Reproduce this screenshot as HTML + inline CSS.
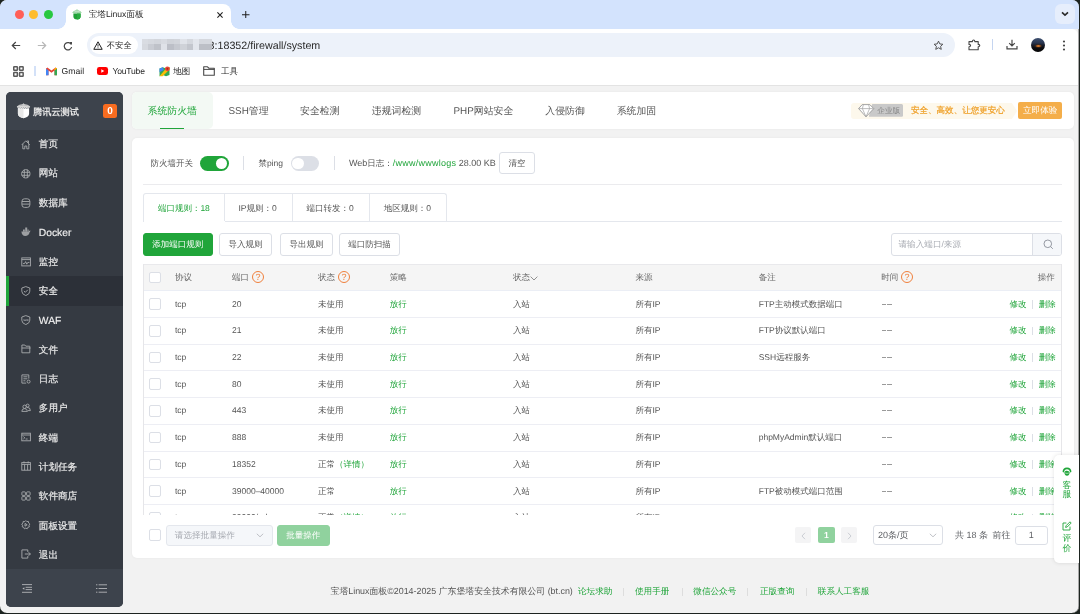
<!DOCTYPE html>
<html><head><meta charset="utf-8">
<style>
*{box-sizing:border-box;margin:0;padding:0}
html,body{text-rendering:geometricPrecision;width:1080px;height:614px;overflow:hidden;background:#1d2420;font-family:"Liberation Sans",sans-serif}
.abs{position:absolute}
#win{will-change:transform;position:absolute;left:0;top:0;width:1079px;height:613px;border-radius:7px;overflow:hidden;background:#f2f2f2;box-shadow:inset -0.6px 0 0 #777}
#tabs{position:absolute;left:0;top:0;width:1079px;height:29px;background:#d3e3fd}
#tb{position:absolute;left:0;top:28.5px;width:1078.4px;height:30px;background:#fff;border-radius:0 6px 0 0}
#bm{position:absolute;left:0;top:58px;width:1078.4px;height:27.5px;background:#fff;border-bottom:1px solid #e3e3e3}
.dot{position:absolute;width:9px;height:9px;border-radius:50%;top:10px}
#tab{position:absolute;left:66px;top:4px;width:165px;height:25px;background:#fff;border-radius:8px 8px 0 0}
.fl{position:absolute;bottom:0;width:8px;height:8px;background:radial-gradient(circle at var(--p) 0,#d3e3fd 7.5px,#fff 8px)}
.fl.l{left:-8px;--p:0}.fl.r{right:-8px;--p:100%}
.t{position:absolute;white-space:nowrap;line-height:1}
#side{position:absolute;left:6px;top:92px;width:117px;height:515px;background:#353a42;border-radius:5px;overflow:hidden}
#side .hd{position:absolute;left:0;top:0;width:117px;height:38px;background:#3d434c}
#side .ft{position:absolute;left:0;top:477px;width:117px;height:38px;background:#3d434c}
.mi{position:absolute;left:0;width:117px;height:29.3px}
.mi span{position:absolute;left:32.8px;top:50%;transform:translateY(calc(-50% - 0.5px));color:#e8e8e8;font-size:9.6px;font-weight:500;white-space:nowrap;-webkit-text-stroke:0.2px #e8e8e8}
.mi svg{position:absolute;left:14.8px;top:9.6px}
.mi.on{background:#2c3038}
.mi.on:before{content:"";position:absolute;left:0;top:0;width:3px;height:100%;background:#20a53a}
#nav{position:absolute;left:132px;top:92.2px;width:942px;height:37px;background:#fff;border-radius:5px;box-shadow:0 0 3px rgba(0,0,0,0.05)}
#main{position:absolute;left:132px;top:138px;width:942px;height:419.5px;background:#fff;border-radius:5px;box-shadow:0 0 3px rgba(0,0,0,0.05)}
.nv{top:15.1px;font-size:9.9px;color:#555}
.tx{font-size:8.5px;color:#555}
.btn{border:1px solid #dcdfe6;border-radius:3px;background:#fff;font-size:8.5px;color:#555;text-align:center;display:flex;align-items:center;justify-content:center;white-space:nowrap;padding-top:1.5px}
.cb{width:11.6px;height:11.5px;border:1px solid #dcdfe6;border-radius:2px;background:#fff}
.th{top:9.1px;font-size:8.5px;color:#666}
.td{font-size:8.5px;color:#555}
.q{position:absolute;width:12px;height:12px;border:1px solid #f0803c;border-radius:50%;color:#f0803c;font-size:9px;text-align:center;line-height:10.5px}
.ftl{top:587px;font-size:8.6px;color:#20a53a}
</style></head><body>
<div id="win">
  <div id="tabs"></div>
  <div class="dot" style="left:15px;background:#ff5f57"></div>
  <div class="dot" style="left:29px;background:#febc2e"></div>
  <div class="dot" style="left:43.5px;background:#28c840"></div>

  <div id="tab"><div class="fl l"></div><div class="fl r"></div></div>
  <svg class="abs" style="left:72.2px;top:8.8px" width="10" height="11" viewBox="0 0 10 11"><path d="M0.2 3.8Q1.2 1.8 3 1.4L5 0.2L7 1.4Q8.8 1.8 9.8 3.8L8.6 4.2H1.4Z" fill="#9fd8a8"/><path d="M2.5 2.6Q5 1.8 7.5 2.6" stroke="#d8f0dc" stroke-width="0.6" fill="none"/><path d="M1.4 4.4H8.6V7.6Q8.6 10.4 5 10.6Q1.4 10.4 1.4 7.6Z" fill="#1ea036"/><path d="M5 4.4H8.6V7.6Q8.6 10.4 5 10.6Z" fill="#27ab3e"/></svg>
  <div class="t" style="left:88.7px;top:9.8px;font-size:8.6px;color:#1f1f1f">宝塔Linux面板</div>
  <svg class="abs" style="left:217px;top:11.6px" width="6" height="6" viewBox="0 0 6 6"><path d="M0.4 0.4L5.6 5.6M5.6 0.4L0.4 5.6" stroke="#1f1f1f" stroke-width="1.1"/></svg>
  <svg class="abs" style="left:242.3px;top:10.8px" width="7.5" height="7.5" viewBox="0 0 7.5 7.5"><path d="M3.75 0V7.5M0 3.75H7.5" stroke="#1f1f1f" stroke-width="1"/></svg>
  <div class="abs" style="left:1055px;top:4px;width:20px;height:20px;border-radius:6px;background:#e6eefc"></div>
  <svg class="abs" style="left:1061px;top:11px" width="8" height="6" viewBox="0 0 8 6"><path d="M1 1.4L4 4.2L7 1.4" stroke="#2a2a2a" stroke-width="1.6" fill="none"/></svg>
  <div id="tb"></div>
  <svg class="abs" style="left:11px;top:40.5px" width="10" height="9" viewBox="0 0 10 9"><path d="M9.2 4.5H1.5M4.8 1L1.3 4.5L4.8 8" stroke="#474747" stroke-width="1.2" fill="none"/></svg>
  <svg class="abs" style="left:36.5px;top:40.5px" width="10" height="9" viewBox="0 0 10 9"><path d="M0.8 4.5H8.5M5.2 1L8.7 4.5L5.2 8" stroke="#b8b8b8" stroke-width="1.2" fill="none"/></svg>
  <svg class="abs" style="left:62.5px;top:40.5px" width="10" height="10" viewBox="0 0 10 10"><path d="M8.3 3.6A3.7 3.7 0 1 0 8.6 6" stroke="#474747" stroke-width="1.2" fill="none"/><path d="M6.3 0.9H9V3.7Z" fill="#474747"/></svg>
  <div class="abs" style="left:86.7px;top:32.8px;width:868.3px;height:24px;border-radius:12px;background:#edf2fa"></div>
  <div class="abs" style="left:90px;top:36.3px;width:47.5px;height:17.5px;border-radius:9px;background:#fff"></div>
  <svg class="abs" style="left:93px;top:40.5px" width="10" height="9" viewBox="0 0 10 9"><path d="M5 0.8L9.2 8.3H0.8Z" stroke="#1f1f1f" stroke-width="1" fill="none" stroke-linejoin="round"/><path d="M5 3.2V5.6M5 6.4V7.2" stroke="#1f1f1f" stroke-width="0.9"/></svg>
  <div class="t" style="left:106.8px;top:40.8px;font-size:8.3px;font-weight:500;color:#1f1f1f">不安全</div>
  <div class="t" style="left:208.6px;top:40.8px;font-size:10.7px;color:#2a2a2a">3:18352/firewall/system</div>
  <div class="abs" style="left:0;top:0;width:0;height:0;filter:blur(0.7px)">
    <div class="abs" style="left:141.7px;top:39.3px;width:6.6px;height:4.3px;background:#d9dce2"></div>
    <div class="abs" style="left:141.7px;top:43.5px;width:6.6px;height:6.2px;background:#d6d9df"></div>
    <div class="abs" style="left:148.0px;top:39.3px;width:6.3px;height:4.3px;background:#d6d9df"></div>
    <div class="abs" style="left:148.0px;top:43.5px;width:6.3px;height:6.2px;background:#c9ccd3"></div>
    <div class="abs" style="left:154.0px;top:39.3px;width:6.9px;height:4.3px;background:#d3d6dc"></div>
    <div class="abs" style="left:154.0px;top:43.5px;width:6.9px;height:6.2px;background:#bfc2c9"></div>
    <div class="abs" style="left:160.6px;top:39.3px;width:6.6px;height:4.3px;background:#d8dbe1"></div>
    <div class="abs" style="left:160.6px;top:43.5px;width:6.6px;height:6.2px;background:#dfe2e8"></div>
    <div class="abs" style="left:166.9px;top:39.3px;width:7.0px;height:4.3px;background:#d0d3d9"></div>
    <div class="abs" style="left:166.9px;top:43.5px;width:7.0px;height:6.2px;background:#bcbfc7"></div>
    <div class="abs" style="left:173.6px;top:39.3px;width:6.9px;height:4.3px;background:#d2d5db"></div>
    <div class="abs" style="left:173.6px;top:43.5px;width:6.9px;height:6.2px;background:#c6c9d0"></div>
    <div class="abs" style="left:180.2px;top:39.3px;width:6.6px;height:4.3px;background:#e0e3e9"></div>
    <div class="abs" style="left:180.2px;top:43.5px;width:6.6px;height:6.2px;background:#cfd2d8"></div>
    <div class="abs" style="left:186.5px;top:39.3px;width:6.6px;height:4.3px;background:#d5d8de"></div>
    <div class="abs" style="left:186.5px;top:43.5px;width:6.6px;height:6.2px;background:#c3c6cd"></div>
    <div class="abs" style="left:192.8px;top:39.3px;width:6.6px;height:4.3px;background:#e3e6ec"></div>
    <div class="abs" style="left:192.8px;top:43.5px;width:6.6px;height:6.2px;background:#e3e6ec"></div>
    <div class="abs" style="left:199.1px;top:39.3px;width:12.5px;height:4.3px;background:#d5d8de"></div>
    <div class="abs" style="left:199.1px;top:43.5px;width:12.5px;height:6.2px;background:#bcbfc6"></div>
  </div>
  
  <svg class="abs" style="left:932.5px;top:39.8px" width="11" height="11" viewBox="0 0 24 24"><path d="M12 2.5L14.9 8.6L21.5 9.3L16.6 13.8L18 20.4L12 17L6 20.4L7.4 13.8L2.5 9.3L9.1 8.6Z" stroke="#474747" stroke-width="2" fill="none" stroke-linejoin="round"/></svg>
  <svg class="abs" style="left:967.5px;top:38.5px" width="13" height="12" viewBox="0 0 13 12"><path d="M1 2.6H4.4Q4.4 1 5.6 1Q6.8 1 6.8 2.6H10.2V5.4Q11.8 5.4 11.8 6.6Q11.8 7.8 10.2 7.8V10.8H1V7.8Q2.6 7.8 2.6 6.6Q2.6 5.4 1 5.4Z" stroke="#474747" stroke-width="1.1" fill="none" stroke-linejoin="round"/></svg>
  <div class="abs" style="left:992.3px;top:39.2px;width:1px;height:11px;background:#c5d5f0"></div>
  <svg class="abs" style="left:1006px;top:39.2px" width="12" height="11" viewBox="0 0 12 11"><path d="M6 0.8V7M3.2 4.2L6 7L8.8 4.2M1 7V9.8H11V7" stroke="#474747" stroke-width="1.2" fill="none"/></svg>
  <div class="abs" style="left:1030.8px;top:37.9px;width:14.2px;height:14.2px;border-radius:50%;overflow:hidden;background:linear-gradient(180deg,#3d5070 0%,#2a3650 35%,#1a1e2a 52%,#0c0c10 70%,#050505 100%)"><div class="abs" style="left:3px;top:6.5px;width:8px;height:4px;border-radius:50%;background:radial-gradient(ellipse at 55% 50%,#f5b040 0,#c06a28 20%,rgba(90,50,20,0.5) 50%,rgba(0,0,0,0) 75%)"></div></div>
  <svg class="abs" style="left:1061.5px;top:40px" width="4" height="11" viewBox="0 0 4 11"><circle cx="2" cy="1.5" r="1.1" fill="#474747"/><circle cx="2" cy="5.5" r="1.1" fill="#474747"/><circle cx="2" cy="9.5" r="1.1" fill="#474747"/></svg>
  <div id="bm"></div>
  <svg class="abs" style="left:13.3px;top:65.8px" width="11" height="11" viewBox="0 0 11 11"><g stroke="#5a5a5a" stroke-width="1.5" fill="none"><rect x="0.75" y="0.75" width="3.6" height="3.6" rx="0.5"/><rect x="6.55" y="0.75" width="3.6" height="3.6" rx="0.5"/><rect x="0.75" y="6.55" width="3.6" height="3.6" rx="0.5"/><rect x="6.55" y="6.55" width="3.6" height="3.6" rx="0.5"/></g></svg>
  <div class="abs" style="left:34.2px;top:65.8px;width:1.5px;height:10.5px;background:#d3e1f8"></div>
  <svg class="abs" style="left:45.8px;top:67px" width="11" height="9" viewBox="0 0 11 9"><path d="M0 1.5V8.2H2.5V3.6L5.5 5.8L8.5 3.6V8.2H11V1.5L9.6 0.6L5.5 3.6L1.4 0.6Z" fill="#ea4335"/><path d="M0 1.5V8.2H2.5V3.6Z" fill="#4285f4"/><path d="M8.5 3.6V8.2H11V1.5Z" fill="#34a853"/><path d="M9.6 0.6L11 1.5L8.5 3.6V2.2Z" fill="#fbbc04"/></svg>
  <div class="t" style="left:61.6px;top:67px;font-size:8.6px;color:#1f1f1f">Gmail</div>
  <div class="abs" style="left:96.7px;top:66.8px;width:11px;height:8px;border-radius:2.3px;background:#ff0000"></div>
  <svg class="abs" style="left:96.7px;top:66.8px" width="11" height="8" viewBox="0 0 11 8"><path d="M4.3 2.3L7.3 4L4.3 5.7Z" fill="#fff"/></svg>
  <div class="t" style="left:112.4px;top:67px;font-size:8.6px;color:#1f1f1f;letter-spacing:-0.2px">YouTube</div>
  <svg class="abs" style="left:158.5px;top:65.5px" width="11" height="11" viewBox="0 0 11 11"><path d="M0.5 2.5L3.8 1.2L7 2.5L10.5 1.2V9L7 10.3L3.8 9L0.5 10.3Z" fill="#34a853"/><path d="M0.5 10.3L7 2.5L10.5 1.2V3.5L3.6 10.3Z" fill="#fbbc04"/><path d="M3.8 1.2L0.5 2.5V6.2L4.8 4Z" fill="#4285f4"/><circle cx="8.4" cy="2.8" r="2.4" fill="#ea4335"/><circle cx="8.4" cy="2.8" r="0.9" fill="#a52714"/></svg>
  <div class="t" style="left:173.2px;top:67px;font-size:8.5px;color:#1f1f1f">地图</div>
  <svg class="abs" style="left:203px;top:66px" width="12" height="10" viewBox="0 0 12 10"><path d="M0.7 0.8H4.5L5.8 2.2H11.3V9.2H0.7Z" stroke="#474747" stroke-width="1.1" fill="none" stroke-linejoin="round"/><path d="M0.7 3.4H11.3" stroke="#474747" stroke-width="1"/></svg>
  <div class="t" style="left:221px;top:67px;font-size:8.5px;color:#1f1f1f">工具</div>
  <div id="side">
    <div class="hd">
      <svg class="abs" style="left:9.6px;top:11px" width="15" height="16" viewBox="0 0 15 16"><path d="M7.5 0.3L8.6 1.3Q11.6 1.4 14.2 3.4L13.2 5.2L12 4.4L10.8 5.4L9.6 4.4L8.5 5.4L7.5 4.4L6.5 5.4L5.4 4.4L4.2 5.4L3 4.4L1.8 5.2L0.8 3.4Q3.4 1.4 6.4 1.3Z" fill="#d8d8d8"/><path d="M2.4 3Q7.5 1 12.6 3" stroke="#9a9ca0" stroke-width="0.5" fill="none"/><path d="M1.9 5.4L3 4.9L4.2 5.8L5.4 4.9L6.5 5.8L7.5 4.9L8.5 5.8L9.6 4.9L10.8 5.8L12 4.9L13.1 5.4V10.8Q13.1 14 7.5 15.3Q1.9 14 1.9 10.8Z" fill="#fff"/><path d="M1.9 5.4L3 4.9L4.2 5.8L5.4 4.9L6.5 5.8L7.5 4.9V15.3Q1.9 14 1.9 10.8Z" fill="#e9e9e9"/></svg>
      <div class="t" style="left:27px;top:15.6px;font-size:9.2px;font-weight:bold;color:#e4e4e4">腾讯云测试</div>
      <div class="abs" style="left:97px;top:12px;width:14px;height:14px;border-radius:2.5px;background:#f86c20;color:#fff;font-size:10px;font-weight:bold;text-align:center;line-height:15.4px">0</div>
    </div>
    <div class="mi" style="top:38.00px"><svg width="10" height="10" viewBox="0 0 10 10"><path d="M0.8 4.8L4.8 0.8L8.8 4.8M1.8 3.8V8.8H3.8V6H5.8V8.8H7.8V3.8M6.3 1.6V0.9H7.5V3" stroke="#a9abae" stroke-width="0.9" fill="none" stroke-linejoin="round"/></svg><span style="margin-top:0.50px">首页</span></div>
    <div class="mi" style="top:67.26px"><svg width="10" height="10" viewBox="0 0 10 10"><circle cx="4.8" cy="4.8" r="4.2" stroke="#a9abae" stroke-width="0.9" fill="none"/><path d="M0.8 3.3H8.8M0.8 6.3H8.8M3.3 0.7V8.9M6.3 0.7V8.9" stroke="#a9abae" stroke-width="0.9" fill="none"/></svg><span style="margin-top:0.60px">网站</span></div>
    <div class="mi" style="top:96.52px"><svg width="10" height="10" viewBox="0 0 10 10"><rect x="0.9" y="0.8" width="8" height="8.6" rx="2.6" stroke="#a9abae" stroke-width="0.9" fill="none"/><path d="M1 3.5H8.8M1 6.1H8.8" stroke="#a9abae" stroke-width="0.9" fill="none"/></svg><span style="margin-top:0.70px">数据库</span></div>
    <div class="mi" style="top:125.78px"><svg width="10" height="10" viewBox="0 0 10 10"><path d="M0.4 4.6H7.8Q8.4 3.4 9.4 3.6Q9.4 4.8 8.6 5.2Q7.8 9 4.2 9Q0.8 9 0.4 4.6Z" fill="#9d9fa2"/><path d="M2 2.6H3.8V4.8H2Z M4.2 0.6H6.2V4.8H4.2Z M6.6 2.4H7.6V4.8H6.6Z" fill="#9d9fa2"/></svg><span style="font-size:10.3px;font-weight:normal;margin-top:1.70px;color:#f0f0f0;-webkit-text-stroke:0.15px #f0f0f0">Docker</span></div>
    <div class="mi" style="top:155.04px"><svg width="10" height="10" viewBox="0 0 10 10"><rect x="0.8" y="0.9" width="8.6" height="8" stroke="#a9abae" stroke-width="0.9" fill="none"/><path d="M0.8 2.6H9.4M2 6.6L3.6 6.6L4.6 4.6L5.8 7.2L6.8 5.4L8.4 5.4" stroke="#a9abae" stroke-width="0.9" fill="none"/></svg><span style="margin-top:0.90px">监控</span></div>
    <div class="mi on" style="top:184.30px"><svg width="10" height="10" viewBox="0 0 10 10"><path d="M4.8 0.6L8.8 2V5.2Q8.8 8.2 4.8 9.6Q0.8 8.2 0.8 5.2V2Z" stroke="#a9abae" stroke-width="0.9" fill="none" stroke-linejoin="round"/><path d="M2.9 5L4.3 6.3L6.8 3.8" stroke="#a9abae" stroke-width="0.9" fill="none"/></svg><span style="margin-top:1.00px">安全</span></div>
    <div class="mi" style="top:213.56px"><svg width="10" height="10" viewBox="0 0 10 10"><path d="M4.8 0.6L8.8 2V5.2Q8.8 8.2 4.8 9.6Q0.8 8.2 0.8 5.2V2Z" stroke="#a9abae" stroke-width="0.9" fill="none" stroke-linejoin="round"/><path d="M2.6 4.2L3.2 6L3.8 4.6L4.4 6L5 4.2M5.5 6L6.1 4.2L6.7 6M7.2 4.2V6" stroke="#a9abae" stroke-width="0.5" fill="none"/></svg><span style="font-size:10.3px;font-weight:normal;margin-top:2.00px;color:#f0f0f0;-webkit-text-stroke:0.15px #f0f0f0">WAF</span></div>
    <div class="mi" style="top:242.82px"><svg width="10" height="10" viewBox="0 0 10 10"><path d="M0.9 1H3.8L4.8 2.2H8.8V8.8H0.9Z" stroke="#a9abae" stroke-width="0.9" fill="none" stroke-linejoin="round"/><path d="M0.9 4H9.6" stroke="#a9abae" stroke-width="0.9" fill="none"/></svg><span style="margin-top:1.20px">文件</span></div>
    <div class="mi" style="top:272.08px"><svg width="10" height="10" viewBox="0 0 10 10"><path d="M7.8 4.6V0.9H0.9V9.1H5.2" stroke="#a9abae" stroke-width="0.9" fill="none"/><path d="M2.4 2.8H6.4M2.4 4.8H6.4M2.4 6.8H4.4" stroke="#a9abae" stroke-width="0.9" fill="none"/><circle cx="7.6" cy="7.6" r="1.5" stroke="#a9abae" stroke-width="0.9" fill="none"/></svg><span style="margin-top:1.30px">日志</span></div>
    <div class="mi" style="top:301.34px"><svg width="10" height="10" viewBox="0 0 10 10"><circle cx="3.6" cy="3.8" r="1.7" stroke="#a9abae" stroke-width="0.9" fill="none"/><circle cx="6.6" cy="2.6" r="1.5" stroke="#a9abae" stroke-width="0.9" fill="none"/><path d="M0.8 8.4Q0.8 5.6 3.6 5.6Q6.4 5.6 6.4 8.4ZM6 4.4Q9.4 4.2 9.4 7.6H7" stroke="#a9abae" stroke-width="0.9" fill="none"/></svg><span style="margin-top:1.40px">多用户</span></div>
    <div class="mi" style="top:330.60px"><svg width="10" height="10" viewBox="0 0 10 10"><rect x="0.8" y="1.2" width="8.6" height="7.6" stroke="#a9abae" stroke-width="0.9" fill="none"/><path d="M0.8 3H9.4M2.4 4.6L3.8 5.8L2.4 7M4.6 7H6.6" stroke="#a9abae" stroke-width="0.9" fill="none"/></svg><span style="margin-top:1.50px">终端</span></div>
    <div class="mi" style="top:359.86px"><svg width="10" height="10" viewBox="0 0 10 10"><rect x="0.8" y="1.6" width="8.6" height="7.6" stroke="#a9abae" stroke-width="0.9" fill="none"/><path d="M0.8 3.4H9.4M3 0.4V2.4M7.2 0.4V2.4M3.6 3.4V9.2M6.6 3.4V9.2" stroke="#a9abae" stroke-width="0.9" fill="none"/></svg><span style="margin-top:1.60px">计划任务</span></div>
    <div class="mi" style="top:389.12px"><svg width="10" height="10" viewBox="0 0 10 10"><rect x="0.9" y="0.9" width="3.5" height="3.5" rx="0.6" stroke="#a9abae" stroke-width="0.9" fill="none"/><rect x="5.6" y="0.9" width="3.5" height="3.5" rx="0.6" stroke="#a9abae" stroke-width="0.9" fill="none"/><rect x="0.9" y="5.6" width="3.5" height="3.5" rx="0.6" stroke="#a9abae" stroke-width="0.9" fill="none"/><rect x="5.6" y="5.6" width="3.5" height="3.5" rx="0.6" stroke="#a9abae" stroke-width="0.9" fill="none"/></svg><span style="margin-top:1.70px">软件商店</span></div>
    <div class="mi" style="top:418.38px"><svg width="10" height="10" viewBox="0 0 10 10"><path d="M4.8 0.6L5.8 1.6L7.4 1.4L7.6 3L8.9 4.1L8 5.3L8.4 6.8L6.9 7.3L6.2 8.8L4.8 8.1L3.4 8.8L2.7 7.3L1.2 6.8L1.6 5.3L0.7 4.1L2 3L2.2 1.4L3.8 1.6Z" stroke="#a9abae" stroke-width="0.9" fill="none" stroke-linejoin="round"/><path d="M4 3.4L6.2 4.8L4 6.2Z" stroke="#a9abae" stroke-width="0.9" fill="none"/></svg><span style="margin-top:1.80px">面板设置</span></div>
    <div class="mi" style="top:447.64px"><svg width="10" height="10" viewBox="0 0 10 10"><path d="M6.8 3V0.9H0.9V9.1H6.8V7" stroke="#a9abae" stroke-width="0.9" fill="none"/><path d="M3.8 5H9.4M7.6 3.2L9.4 5L7.6 6.8" stroke="#a9abae" stroke-width="0.9" fill="none"/></svg><span style="margin-top:1.90px">退出</span></div>
    <div class="ft">
      <svg class="abs" style="left:16px;top:14.5px" width="10" height="9" viewBox="0 0 10 9"><path d="M0 0.6H10M3.6 3.3H10M3.6 5.6H10M0 8.3H10" stroke="#b4b6b9" stroke-width="0.9"/><path d="M0.4 4.5L2.4 3.2V5.8Z" fill="#b4b6b9"/></svg>
      <svg class="abs" style="left:90px;top:14.5px" width="11" height="9" viewBox="0 0 11 9"><path d="M2.6 0.8H11M2.6 4.5H11M2.6 8.2H11" stroke="#b4b6b9" stroke-width="0.9"/><path d="M0 0.8H1.4M0 4.5H1.4M0 8.2H1.4" stroke="#b4b6b9" stroke-width="0.9"/></svg>
    </div>
  </div>
  <div id="nav">
    <div class="abs" style="left:0;top:0;width:80.5px;height:37px;background:#f3f9f4;border-radius:5px"></div>
    <div class="abs" style="left:28px;top:35.5px;width:24.3px;height:1.5px;background:#20a53a"></div>
    <div class="t nv" style="left:15.5px;color:#20a53a">系统防火墙</div>
    <div class="t nv" style="left:96.5px">SSH管理</div>
    <div class="t nv" style="left:168px">安全检测</div>
    <div class="t nv" style="left:239.8px">违规词检测</div>
    <div class="t nv" style="left:321.5px">PHP网站安全</div>
    <div class="t nv" style="left:413.3px">入侵防御</div>
    <div class="t nv" style="left:484.7px">系统加固</div>
    <svg class="abs" style="left:718.6px;top:10.6px" width="167" height="16" viewBox="0 0 167 16"><path d="M0 3Q0 0 3 0H160.9L166.1 8L160.9 16H3Q0 16 0 13Z" fill="#fdf8ec"/></svg>
    <div class="abs" style="left:736.7px;top:11.4px;width:34.4px;height:13.1px;background:#c9c9c9;border-radius:0 1.5px 1.5px 0;clip-path:polygon(0 100%,3.7px 0,100% 0,100% 100%)"></div>
    <svg class="abs" style="left:725.5px;top:11.8px" width="17" height="14" viewBox="0 0 17 14"><path d="M4.2 0.6H11.8L15.8 4.6L8 12.8L0.6 4.6Z" stroke="#9a9a9a" stroke-width="0.9" fill="#fff" stroke-linejoin="round"/><path d="M0.6 4.6H15.8M5.4 0.6L4.4 4.6L8 12.8L11.6 4.6L10.6 0.6" stroke="#a0a0a0" stroke-width="0.7" fill="none" stroke-linejoin="round"/></svg>
    <div class="t" style="left:745.2px;top:15.2px;font-size:7.7px;color:#858585;font-weight:500">企业版</div>
    <div class="t" style="left:778.9px;top:14.2px;font-size:8.55px;font-weight:500;color:#ef9f26;-webkit-text-stroke:0.2px #ef9f26">安全、高效、让您更安心</div>
    <div class="abs" style="left:886px;top:9.6px;width:44px;height:17.2px;border-radius:2px;background:#f4ae4a"></div>
    <div class="t" style="left:891px;top:14px;font-size:8.6px;color:#fff;font-weight:500">立即体验</div>
  </div>
  <div id="main">
    <div class="t tx" style="left:18.4px;top:20.8px">防火墙开关</div>
    <div class="abs" style="left:68px;top:18.1px;width:28.6px;height:14.6px;border-radius:8px;background:#20a53a"></div>
    <div class="abs" style="left:83.7px;top:19.5px;width:11.8px;height:11.8px;border-radius:50%;background:#fff"></div>
    <div class="abs" style="left:111.3px;top:18px;width:0.8px;height:14px;background:#dcdfe6"></div>
    <div class="t tx" style="left:126.4px;top:20.8px">禁ping</div>
    <div class="abs" style="left:159px;top:18.1px;width:28.2px;height:14.6px;border-radius:8px;background:#dcdfe6"></div>
    <div class="abs" style="left:160.4px;top:19.5px;width:11.8px;height:11.8px;border-radius:50%;background:#fff"></div>
    <div class="abs" style="left:202.2px;top:18px;width:0.8px;height:14px;background:#dcdfe6"></div>
    <div class="t tx" style="left:217px;top:20.8px"><span style="font-size:9px">Web</span>日志<span style="display:inline-block;width:8.3px">：</span><span style="font-size:9px;letter-spacing:0.25px;color:#20a53a">/www/wwwlogs</span><span style="font-size:9px"> 28.00 KB</span></div>
    <div class="abs btn" style="left:367.4px;top:14.2px;width:35.3px;height:22.3px">清空</div>
    <div class="abs" style="left:11px;top:46px;width:919px;height:1px;background:#ebebee"></div>
    <!-- sub tabs -->
    <div class="abs" style="left:11px;top:55.3px;width:304px;height:28.5px;border:1px solid #e4e7ed;border-bottom:none;border-radius:3px 3px 0 0"></div>
    <div class="abs" style="left:315px;top:82.8px;width:615px;height:1px;background:#e4e7ed"></div>
    <div class="abs" style="left:92.4px;top:55.3px;width:1px;height:28px;background:#e4e7ed"></div>
    <div class="abs" style="left:93.4px;top:82.8px;width:221.6px;height:1px;background:#e4e7ed"></div>
    <div class="abs" style="left:159.7px;top:55.3px;width:1px;height:28px;background:#e4e7ed"></div>
    <div class="abs" style="left:237px;top:55.3px;width:1px;height:28px;background:#e4e7ed"></div>
    <div class="t tx" style="left:25.9px;top:65.5px;color:#20a53a">端口规则：18</div>
    <div class="t tx" style="left:106.4px;top:65.5px">IP规则：0</div>
    <div class="t tx" style="left:174.5px;top:65.5px">端口转发：0</div>
    <div class="t tx" style="left:251.8px;top:65.5px">地区规则：0</div>
    <!-- buttons -->
    <div class="abs btn" style="left:11px;top:95px;width:69.6px;height:22.5px;background:#20a53a;border-color:#20a53a;color:#fff">添加端口规则</div>
    <div class="abs btn" style="left:87px;top:95px;width:53px;height:22.5px">导入规则</div>
    <div class="abs btn" style="left:148.4px;top:95px;width:52.2px;height:22.5px">导出规则</div>
    <div class="abs btn" style="left:207px;top:95px;width:60.9px;height:22.5px">端口防扫描</div>
    <div class="abs" style="left:759px;top:95px;width:170.5px;height:22.5px;border:1px solid #dcdfe6;border-radius:3px;overflow:hidden">
      <div class="abs" style="left:140.3px;top:0;width:31px;height:21px;background:#f5f7fa;border-left:1px solid #dcdfe6"></div>
      <svg class="abs" style="left:150.5px;top:5px" width="11" height="11" viewBox="0 0 11 11"><circle cx="4.8" cy="4.8" r="3.8" stroke="#8a8f99" stroke-width="0.9" fill="none"/><path d="M7.6 7.6L9.8 9.8" stroke="#8a8f99" stroke-width="0.9"/></svg>
      <div class="t" style="left:6.5px;top:5.8px;font-size:8.6px;color:#a8abb2">请输入端口/来源</div>
    </div>
    <!-- table -->
    <div id="tbl" class="abs" style="left:11px;top:126px;width:919px;height:251px;overflow:hidden;border-left:1px solid #e6e6e9;border-right:1px solid #e6e6e9">
      <div class="abs" style="left:0;top:0;width:918px;height:27px;background:#f5f5f5;border-top:1px solid #e9e9ec;border-bottom:1px solid #ebeef5"></div>
      <div class="abs cb" style="left:5px;top:7.5px"></div>
      <div class="t th" style="left:31px">协议</div>
      <div class="t th" style="left:88px">端口</div><div class="q" style="left:108px;top:7.4px">?</div>
      <div class="t th" style="left:174px">状态</div><div class="q" style="left:194px;top:7.4px">?</div>
      <div class="t th" style="left:245.7px">策略</div>
      <div class="t th" style="left:369px">状态<svg style="position:absolute;left:16.8px;top:2.6px" width="8" height="5" viewBox="0 0 8 5"><path d="M0.6 0.6L4 4L7.4 0.6" stroke="#777" stroke-width="0.8" fill="none"/></svg></div>
      <div class="t th" style="left:491.5px">来源</div>
      <div class="t th" style="left:614.7px">备注</div>
      <div class="t th" style="left:737.2px">时间</div><div class="q" style="left:757px;top:7.4px">?</div>
      <div class="t th" style="left:893.7px">操作</div>
      <div class="abs" style="left:0;top:52.93px;width:918px;height:1px;background:#edeef4"></div>
      <div class="abs cb" style="left:5px;top:34.30px"></div>
      <div class="t td" style="left:31px;top:35.50px">tcp</div>
      <div class="t td" style="left:88px;top:35.50px">20</div>
      <div class="t td" style="left:174px;top:35.50px">未使用</div>
      <div class="t td" style="left:245.7px;top:35.50px;color:#20a53a">放行</div>
      <div class="t td" style="left:369px;top:35.50px">入站</div>
      <div class="t td" style="left:491.5px;top:35.50px">所有IP</div>
      <div class="t td" style="left:614.7px;top:35.50px">FTP主动模式数据端口</div>
      <div class="abs" style="left:737.9px;top:39.50px;width:4.3px;height:0.9px;background:#9a9a9a"></div><div class="abs" style="left:743.3px;top:39.50px;width:4.3px;height:0.9px;background:#9a9a9a"></div>
      <div class="t td" style="left:865.5px;top:35.50px;color:#20a53a">修改</div>
      <div class="abs" style="left:888.2px;top:36.00px;width:0.8px;height:8.5px;background:#dcdfe6"></div>
      <div class="t td" style="left:894.7px;top:35.50px;color:#20a53a">删除</div>
      <div class="abs" style="left:0;top:79.66px;width:918px;height:1px;background:#edeef4"></div>
      <div class="abs cb" style="left:5px;top:61.03px"></div>
      <div class="t td" style="left:31px;top:62.23px">tcp</div>
      <div class="t td" style="left:88px;top:62.23px">21</div>
      <div class="t td" style="left:174px;top:62.23px">未使用</div>
      <div class="t td" style="left:245.7px;top:62.23px;color:#20a53a">放行</div>
      <div class="t td" style="left:369px;top:62.23px">入站</div>
      <div class="t td" style="left:491.5px;top:62.23px">所有IP</div>
      <div class="t td" style="left:614.7px;top:62.23px">FTP协议默认端口</div>
      <div class="abs" style="left:737.9px;top:66.23px;width:4.3px;height:0.9px;background:#9a9a9a"></div><div class="abs" style="left:743.3px;top:66.23px;width:4.3px;height:0.9px;background:#9a9a9a"></div>
      <div class="t td" style="left:865.5px;top:62.23px;color:#20a53a">修改</div>
      <div class="abs" style="left:888.2px;top:62.73px;width:0.8px;height:8.5px;background:#dcdfe6"></div>
      <div class="t td" style="left:894.7px;top:62.23px;color:#20a53a">删除</div>
      <div class="abs" style="left:0;top:106.39px;width:918px;height:1px;background:#edeef4"></div>
      <div class="abs cb" style="left:5px;top:87.76px"></div>
      <div class="t td" style="left:31px;top:88.96px">tcp</div>
      <div class="t td" style="left:88px;top:88.96px">22</div>
      <div class="t td" style="left:174px;top:88.96px">未使用</div>
      <div class="t td" style="left:245.7px;top:88.96px;color:#20a53a">放行</div>
      <div class="t td" style="left:369px;top:88.96px">入站</div>
      <div class="t td" style="left:491.5px;top:88.96px">所有IP</div>
      <div class="t td" style="left:614.7px;top:88.96px">SSH远程服务</div>
      <div class="abs" style="left:737.9px;top:92.96px;width:4.3px;height:0.9px;background:#9a9a9a"></div><div class="abs" style="left:743.3px;top:92.96px;width:4.3px;height:0.9px;background:#9a9a9a"></div>
      <div class="t td" style="left:865.5px;top:88.96px;color:#20a53a">修改</div>
      <div class="abs" style="left:888.2px;top:89.46px;width:0.8px;height:8.5px;background:#dcdfe6"></div>
      <div class="t td" style="left:894.7px;top:88.96px;color:#20a53a">删除</div>
      <div class="abs" style="left:0;top:133.12px;width:918px;height:1px;background:#edeef4"></div>
      <div class="abs cb" style="left:5px;top:114.49px"></div>
      <div class="t td" style="left:31px;top:115.69px">tcp</div>
      <div class="t td" style="left:88px;top:115.69px">80</div>
      <div class="t td" style="left:174px;top:115.69px">未使用</div>
      <div class="t td" style="left:245.7px;top:115.69px;color:#20a53a">放行</div>
      <div class="t td" style="left:369px;top:115.69px">入站</div>
      <div class="t td" style="left:491.5px;top:115.69px">所有IP</div>
      <div class="abs" style="left:737.9px;top:119.69px;width:4.3px;height:0.9px;background:#9a9a9a"></div><div class="abs" style="left:743.3px;top:119.69px;width:4.3px;height:0.9px;background:#9a9a9a"></div>
      <div class="t td" style="left:865.5px;top:115.69px;color:#20a53a">修改</div>
      <div class="abs" style="left:888.2px;top:116.19px;width:0.8px;height:8.5px;background:#dcdfe6"></div>
      <div class="t td" style="left:894.7px;top:115.69px;color:#20a53a">删除</div>
      <div class="abs" style="left:0;top:159.85px;width:918px;height:1px;background:#edeef4"></div>
      <div class="abs cb" style="left:5px;top:141.22px"></div>
      <div class="t td" style="left:31px;top:142.42px">tcp</div>
      <div class="t td" style="left:88px;top:142.42px">443</div>
      <div class="t td" style="left:174px;top:142.42px">未使用</div>
      <div class="t td" style="left:245.7px;top:142.42px;color:#20a53a">放行</div>
      <div class="t td" style="left:369px;top:142.42px">入站</div>
      <div class="t td" style="left:491.5px;top:142.42px">所有IP</div>
      <div class="abs" style="left:737.9px;top:146.42px;width:4.3px;height:0.9px;background:#9a9a9a"></div><div class="abs" style="left:743.3px;top:146.42px;width:4.3px;height:0.9px;background:#9a9a9a"></div>
      <div class="t td" style="left:865.5px;top:142.42px;color:#20a53a">修改</div>
      <div class="abs" style="left:888.2px;top:142.92px;width:0.8px;height:8.5px;background:#dcdfe6"></div>
      <div class="t td" style="left:894.7px;top:142.42px;color:#20a53a">删除</div>
      <div class="abs" style="left:0;top:186.58px;width:918px;height:1px;background:#edeef4"></div>
      <div class="abs cb" style="left:5px;top:167.95px"></div>
      <div class="t td" style="left:31px;top:169.15px">tcp</div>
      <div class="t td" style="left:88px;top:169.15px">888</div>
      <div class="t td" style="left:174px;top:169.15px">未使用</div>
      <div class="t td" style="left:245.7px;top:169.15px;color:#20a53a">放行</div>
      <div class="t td" style="left:369px;top:169.15px">入站</div>
      <div class="t td" style="left:491.5px;top:169.15px">所有IP</div>
      <div class="t td" style="left:614.7px;top:169.15px">phpMyAdmin默认端口</div>
      <div class="abs" style="left:737.9px;top:173.15px;width:4.3px;height:0.9px;background:#9a9a9a"></div><div class="abs" style="left:743.3px;top:173.15px;width:4.3px;height:0.9px;background:#9a9a9a"></div>
      <div class="t td" style="left:865.5px;top:169.15px;color:#20a53a">修改</div>
      <div class="abs" style="left:888.2px;top:169.65px;width:0.8px;height:8.5px;background:#dcdfe6"></div>
      <div class="t td" style="left:894.7px;top:169.15px;color:#20a53a">删除</div>
      <div class="abs" style="left:0;top:213.31px;width:918px;height:1px;background:#edeef4"></div>
      <div class="abs cb" style="left:5px;top:194.68px"></div>
      <div class="t td" style="left:31px;top:195.88px">tcp</div>
      <div class="t td" style="left:88px;top:195.88px">18352</div>
      <div class="t td" style="left:174px;top:195.88px">正常<span style="color:#20a53a">（详情）</span></div>
      <div class="t td" style="left:245.7px;top:195.88px;color:#20a53a">放行</div>
      <div class="t td" style="left:369px;top:195.88px">入站</div>
      <div class="t td" style="left:491.5px;top:195.88px">所有IP</div>
      <div class="abs" style="left:737.9px;top:199.88px;width:4.3px;height:0.9px;background:#9a9a9a"></div><div class="abs" style="left:743.3px;top:199.88px;width:4.3px;height:0.9px;background:#9a9a9a"></div>
      <div class="t td" style="left:865.5px;top:195.88px;color:#20a53a">修改</div>
      <div class="abs" style="left:888.2px;top:196.38px;width:0.8px;height:8.5px;background:#dcdfe6"></div>
      <div class="t td" style="left:894.7px;top:195.88px;color:#20a53a">删除</div>
      <div class="abs" style="left:0;top:240.04px;width:918px;height:1px;background:#edeef4"></div>
      <div class="abs cb" style="left:5px;top:221.41px"></div>
      <div class="t td" style="left:31px;top:222.61px">tcp</div>
      <div class="t td" style="left:88px;top:222.61px">39000–40000</div>
      <div class="t td" style="left:174px;top:222.61px">正常</div>
      <div class="t td" style="left:245.7px;top:222.61px;color:#20a53a">放行</div>
      <div class="t td" style="left:369px;top:222.61px">入站</div>
      <div class="t td" style="left:491.5px;top:222.61px">所有IP</div>
      <div class="t td" style="left:614.7px;top:222.61px">FTP被动模式端口范围</div>
      <div class="abs" style="left:737.9px;top:226.61px;width:4.3px;height:0.9px;background:#9a9a9a"></div><div class="abs" style="left:743.3px;top:226.61px;width:4.3px;height:0.9px;background:#9a9a9a"></div>
      <div class="t td" style="left:865.5px;top:222.61px;color:#20a53a">修改</div>
      <div class="abs" style="left:888.2px;top:223.11px;width:0.8px;height:8.5px;background:#dcdfe6"></div>
      <div class="t td" style="left:894.7px;top:222.61px;color:#20a53a">删除</div>
      <div class="abs" style="left:0;top:266.77px;width:918px;height:1px;background:#edeef4"></div>
      <div class="abs cb" style="left:5px;top:248.14px"></div>
      <div class="t td" style="left:31px;top:249.34px">tcp</div>
      <div class="t td" style="left:88px;top:249.34px">39000/udp</div>
      <div class="t td" style="left:174px;top:249.34px">正常<span style="color:#20a53a">（详情）</span></div>
      <div class="t td" style="left:245.7px;top:249.34px;color:#20a53a">放行</div>
      <div class="t td" style="left:369px;top:249.34px">入站</div>
      <div class="t td" style="left:491.5px;top:249.34px">所有IP</div>
      <div class="abs" style="left:737.9px;top:253.34px;width:4.3px;height:0.9px;background:#9a9a9a"></div><div class="abs" style="left:743.3px;top:253.34px;width:4.3px;height:0.9px;background:#9a9a9a"></div>
      <div class="t td" style="left:865.5px;top:249.34px;color:#20a53a">修改</div>
      <div class="abs" style="left:888.2px;top:249.84px;width:0.8px;height:8.5px;background:#dcdfe6"></div>
      <div class="t td" style="left:894.7px;top:249.34px;color:#20a53a">删除</div>
    </div>
    <!-- bottom bar -->
    <div class="abs cb" style="left:17px;top:391.3px"></div>
    <div class="abs" style="left:33.8px;top:386.8px;width:107.5px;height:20.8px;border:1px solid #e4e7ed;border-radius:3px;background:#f5f7fa"></div>
    <div class="t" style="left:42.8px;top:393px;font-size:8.6px;color:#a8abb2">请选择批量操作</div>
    <svg class="abs" style="left:124px;top:395px" width="8" height="5" viewBox="0 0 8 5"><path d="M0.8 0.8L4 3.8L7.2 0.8" stroke="#b0b3b9" stroke-width="0.8" fill="none"/></svg>
    <div class="abs btn" style="left:144.9px;top:387px;width:52.9px;height:20.6px;background:#90d29e;border-color:#90d29e;color:#fff;font-weight:500">批量操作</div>
    <div class="abs" style="left:663.3px;top:389px;width:16.1px;height:16.3px;background:#f4f4f5;border-radius:2px"></div>
    <svg class="abs" style="left:669px;top:393.5px" width="5" height="8" viewBox="0 0 5 8"><path d="M4 0.8L1 4L4 7.2" stroke="#c0c4cc" stroke-width="0.8" fill="none"/></svg>
    <div class="abs" style="left:686px;top:389px;width:16.7px;height:16.3px;background:#90d29e;border-radius:2px;color:#fff;font-size:8.6px;font-weight:bold;text-align:center;line-height:16.3px">1</div>
    <div class="abs" style="left:708.5px;top:389px;width:16.7px;height:16.3px;background:#f4f4f5;border-radius:2px"></div>
    <svg class="abs" style="left:714.5px;top:393.5px" width="5" height="8" viewBox="0 0 5 8"><path d="M1 0.8L4 4L1 7.2" stroke="#c0c4cc" stroke-width="0.8" fill="none"/></svg>
    <div class="abs" style="left:740.5px;top:386.7px;width:70.5px;height:20.8px;border:1px solid #dcdfe6;border-radius:3px"></div>
    <div class="t" style="left:746px;top:392.6px;font-size:9px;color:#606266">20条/页</div>
    <svg class="abs" style="left:797px;top:395px" width="8" height="5" viewBox="0 0 8 5"><path d="M0.8 0.8L4 3.8L7.2 0.8" stroke="#b0b3b9" stroke-width="0.8" fill="none"/></svg>
    <div class="t" style="left:823px;top:392.6px;font-size:9px;color:#606266">共 18 条</div>
    <div class="t" style="left:860.5px;top:392.6px;font-size:9px;color:#606266">前往</div>
    <div class="abs" style="left:883px;top:388px;width:32.5px;height:18.7px;border:1px solid #dcdfe6;border-radius:3px;font-size:9px;color:#606266;text-align:center;line-height:17px">1</div>
  </div>
  <div class="t" style="left:330.5px;top:586.8px;font-size:8.9px;color:#555">宝塔Linux面板©2014-2025 广东堡塔安全技术有限公司 (bt.cn)</div>
  <div class="t ftl" style="left:578px">论坛求助</div>
  <div class="t ftl" style="left:635px">使用手册</div>
  <div class="t ftl" style="left:693.3px">微信公众号</div>
  <div class="t ftl" style="left:760px">正版查询</div>
  <div class="t ftl" style="left:817.8px">联系人工客服</div>
  <div class="abs" style="left:623px;top:587.5px;width:0.8px;height:8px;background:#ddd"></div>
  <div class="abs" style="left:681.7px;top:587.5px;width:0.8px;height:8px;background:#ddd"></div>
  <div class="abs" style="left:747px;top:587.5px;width:0.8px;height:8px;background:#ddd"></div>
  <div class="abs" style="left:805.5px;top:587.5px;width:0.8px;height:8px;background:#ddd"></div>
  <div class="abs" style="left:1054px;top:455px;width:30px;height:108px;background:#fff;border-radius:5px;box-shadow:0 0 4px rgba(0,0,0,0.12)"></div>
  <svg class="abs" style="left:1062px;top:467.3px" width="10" height="10" viewBox="0 0 10 10"><path d="M0.6 5Q0.6 0.4 5 0.4Q9.4 0.4 9.4 5L8.2 5.6Q7.6 2.2 5 2.2Q2.4 2.2 1.8 5.6Z" fill="#20a53a"/><path d="M2.4 5Q2.4 8.8 5 8.8Q7.6 8.8 7.6 5Q6 3.6 4 3.8Q3 4.2 2.4 5Z" fill="#20a53a"/><path d="M3.2 6Q5 6.8 6.8 6" stroke="#fff" stroke-width="0.6" fill="none"/></svg>
  <div class="t" style="left:1062.5px;top:480.5px;font-size:8.8px;line-height:9.8px;color:#20a53a;width:10px;white-space:normal">客服</div>
  <svg class="abs" style="left:1062px;top:520.8px" width="10" height="10" viewBox="0 0 10 10"><path d="M8 5.6V9H1V2H4.4" stroke="#20a53a" stroke-width="0.9" fill="none"/><path d="M3.6 6.4L4 4.8L8 0.8L9.2 2L5.2 6Z" stroke="#20a53a" stroke-width="0.9" fill="none" stroke-linejoin="round"/></svg>
  <div class="t" style="left:1062.5px;top:534px;font-size:8.8px;line-height:9.8px;color:#20a53a;width:10px;white-space:normal">评价</div>
</div>
</body></html>
